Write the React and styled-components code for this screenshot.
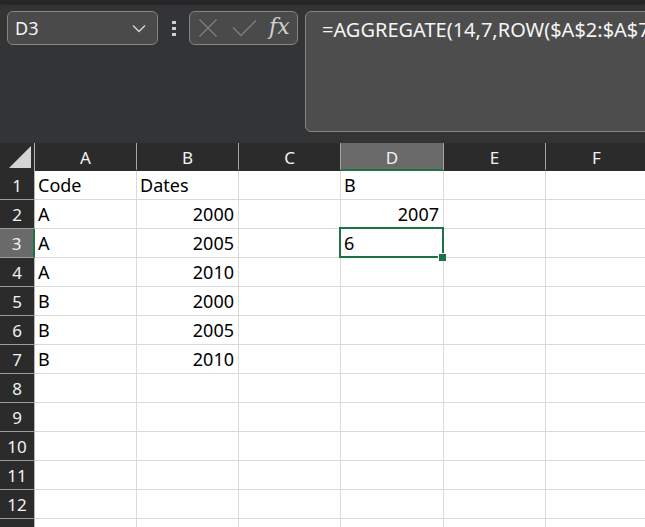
import React from 'react';
import styled, { createGlobalStyle } from 'styled-components';

const GlobalStyle = createGlobalStyle`
  html, body {
    margin: 0;
    padding: 0;
    background: #333436;
    overflow: hidden;
  }
  body {
    font-family: "Noto Sans", "Open Sans", sans-serif;
  }
`;

const columns = ['A', 'B', 'C', 'D', 'E', 'F'];

const rows = [
  ['Code', 'Dates', '', 'B', '', ''],
  ['A', 2000, '', 2007, '', ''],
  ['A', 2005, '', '6', '', ''],
  ['A', 2010, '', '', '', ''],
  ['B', 2000, '', '', '', ''],
  ['B', 2005, '', '', '', ''],
  ['B', 2010, '', '', '', ''],
  ['', '', '', '', '', ''],
  ['', '', '', '', '', ''],
  ['', '', '', '', '', ''],
  ['', '', '', '', '', ''],
  ['', '', '', '', '', ''],
];

const selected = { row: 3, col: 'D' };

export default function App () {
  return (
    <Page>
      <GlobalStyle />
      <TopStrip />
      <Toolbar>
        <NameBox>
          <NameText>D3</NameText>
          <svg width="14" height="9" viewBox="0 0 14 9">
            <path d="M1 1.5 L7 7.5 L13 1.5" fill="none" stroke="#d6d6d6" strokeWidth="1.4" />
          </svg>
        </NameBox>
        <Grip>
          <span />
          <span />
          <span />
        </Grip>
        <FxBox>
          <svg width="20" height="20" viewBox="0 0 20 20">
            <path d="M1.5 1.5 L18.5 18.5 M18.5 1.5 L1.5 18.5" stroke="#7c7c7c" strokeWidth="1.5" />
          </svg>
          <svg width="25" height="20" viewBox="0 0 25 20">
            <path d="M1 9.5 L9 17.5 L24 2.5" fill="none" stroke="#7c7c7c" strokeWidth="1.5" />
          </svg>
          <FxLabel>fx</FxLabel>
        </FxBox>
        <FormulaBox>=AGGREGATE(14,7,ROW($A$2:$A$7)/($A$2:$A$7=D1),1)</FormulaBox>
      </Toolbar>
      <Sheet>
        <Corner>
          <svg width="22" height="22" viewBox="0 0 22 22">
            <path d="M22 0 L22 22 L0 22 Z" fill="#d4d4d4" />
          </svg>
        </Corner>
        {columns.map((col) => (
          <ColHeader key={col} $active={col === selected.col}>{col}</ColHeader>
        ))}
        {rows.map((cells, r) => (
          <React.Fragment key={r}>
            <RowHeader $active={r + 1 === selected.row}>{r + 1}</RowHeader>
            {cells.map((value, c) => (
              <Cell
                key={c}
                $right={typeof value === 'number'}
                $selected={r + 1 === selected.row && columns[c] === selected.col}
              >
                {value}
              </Cell>
            ))}
          </React.Fragment>
        ))}
        {/* next row, only its top edge shows */}
        <RowHeader />
        {columns.map((col) => <Cell key={col} />)}
      </Sheet>
    </Page>
  );
}

const Page = styled.div`
  width: 645px;
  height: 527px;
  overflow: hidden;
  background: #333436;
`;

const TopStrip = styled.div`
  height: 3px;
  background: #262626;
  box-shadow: 0 1px 3px rgba(0, 0, 0, 0.5);
`;

const Toolbar = styled.div`
  display: flex;
  align-items: flex-start;
  height: 140px;
  padding: 8px 0 0 7px;
  box-sizing: border-box;
`;

const Box = styled.div`
  flex: none;
  box-sizing: border-box;
  height: 34px;
  border: 1px solid #858585;
  border-radius: 6px;
  background: #4a4a4a;
`;

const NameBox = styled(Box)`
  display: flex;
  align-items: center;
  justify-content: space-between;
  width: 151px;
  padding: 0 11px 0 7px;
`;

const NameText = styled.span`
  color: #f4f4f4;
  font-size: 18px;
`;

const Grip = styled.div`
  flex: none;
  display: flex;
  flex-direction: column;
  align-items: center;
  gap: 3px;
  width: 31px;
  padding-top: 10px;

  span {
    width: 4px;
    height: 3px;
    background: #cfcfcf;
  }
`;

const FxBox = styled(Box)`
  display: flex;
  align-items: center;
  width: 109px;
  padding: 0 0 0 8px;
  gap: 14px;

  svg {
    flex: none;
  }
`;

const FxLabel = styled.span`
  margin-left: -2px;
  margin-top: -3px;
  color: #d2d2d2;
  font-family: "DejaVu Serif", "Liberation Serif", serif;
  font-style: italic;
  font-size: 22px;
  line-height: 1;
`;

const FormulaBox = styled(Box)`
  width: 400px;
  height: 121px;
  margin-left: 7px;
  padding: 4px 0 0 16px;
  background: #4d4d4d;
  color: #f4f4f4;
  font-size: 20px;
  white-space: nowrap;
  overflow: hidden;
`;

const Sheet = styled.div`
  display: grid;
  grid-template-columns: 35px 102px 102px 102px 103px 102px 102px;
  grid-template-rows: 28px;
  grid-auto-rows: 29px;
  width: 648px;
  font-size: 18px;
`;

const HeaderCell = styled.div`
  box-sizing: border-box;
  display: flex;
  align-items: center;
  justify-content: center;
  background: #2b2b2b;
  color: #f2f2f2;
`;

const Corner = styled(HeaderCell)`
  justify-content: flex-end;
  align-items: flex-end;
  padding: 0 3px 3px 0;
  border-right: 1px solid #b5b5b5;
`;

const ColHeader = styled(HeaderCell)`
  padding-top: 2px;
  font-size: 17px;
  border-right: 1px solid #a4a4a4;
  background: ${(p) => (p.$active ? '#6a6a6a' : '#2b2b2b')};
  border-bottom: 2px solid ${(p) => (p.$active ? '#1f7244' : '#2b2b2b')};
`;

const RowHeader = styled(HeaderCell)`
  font-size: 17px;
  border-bottom: 1px solid #9c9c9c;
  background: ${(p) => (p.$active ? '#6a6a6a' : '#2b2b2b')};
  border-right: ${(p) => (p.$active ? '2px solid #1f7244' : '1px solid #b5b5b5')};
`;

const Cell = styled.div`
  position: relative;
  box-sizing: border-box;
  display: flex;
  align-items: center;
  justify-content: ${(p) => (p.$right ? 'flex-end' : 'flex-start')};
  padding: 0 4px 0 3px;
  background: #fff;
  color: #000;
  border-right: 1px solid #dadada;
  border-bottom: 1px solid #dadada;
  white-space: nowrap;

  ${(p) => p.$selected && `
    z-index: 1;
    &::before {
      content: '';
      position: absolute;
      top: -2px;
      left: -2px;
      right: -1px;
      bottom: -1px;
      border: 2px solid #1f7244;
    }
    &::after {
      content: '';
      position: absolute;
      right: -3px;
      bottom: -4px;
      width: 7px;
      height: 7px;
      background: #1f7244;
      border: 1px solid #fff;
      border-width: 1px 0 0 1px;
    }
  `}
`;
